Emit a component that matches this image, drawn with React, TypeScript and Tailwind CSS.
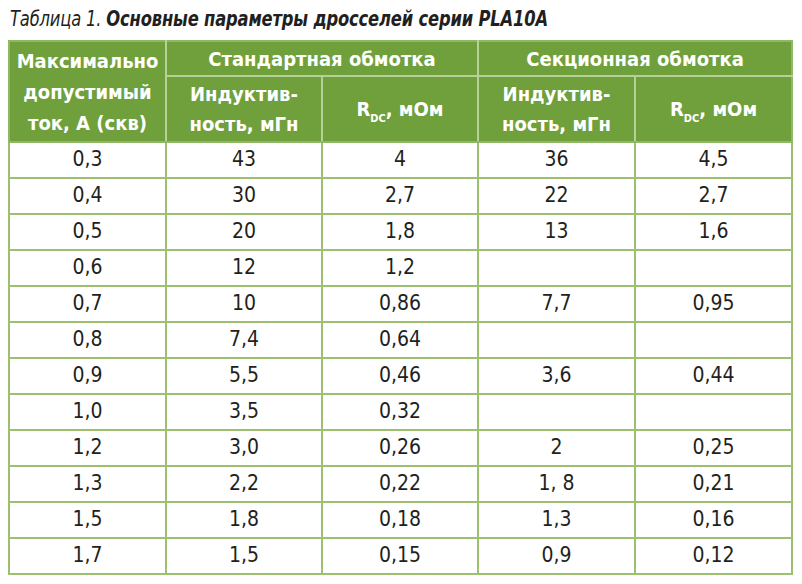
const rows: [string, string, string, string, string][] = [
  ['0,3', '43', '4', '36', '4,5'],
  ['0,4', '30', '2,7', '22', '2,7'],
  ['0,5', '20', '1,8', '13', '1,6'],
  ['0,6', '12', '1,2', '', ''],
  ['0,7', '10', '0,86', '7,7', '0,95'],
  ['0,8', '7,4', '0,64', '', ''],
  ['0,9', '5,5', '0,46', '3,6', '0,44'],
  ['1,0', '3,5', '0,32', '', ''],
  ['1,2', '3,0', '0,26', '2', '0,25'],
  ['1,3', '2,2', '0,22', '1, 8', '0,21'],
  ['1,5', '1,8', '0,18', '1,3', '0,16'],
  ['1,7', '1,5', '0,15', '0,9', '0,12'],
];

const font = "font-['Liberation_Sans_Narrow','DejaVu_Sans_Condensed','Liberation_Sans',sans-serif] [font-stretch:condensed]";

function Rdc() {
  return (
    <span>
      R<sub className="text-[11px] align-[-3px]">DC</sub>, мОм
    </span>
  );
}

export default function App() {
  return (
    <div className={`w-[802px] h-[584px] bg-white text-[#231f20] ${font}`}>
      {/* заголовок */}
      <div className="pl-[10px] pt-[5px] h-[40px] text-[22px] leading-[28px] italic whitespace-nowrap">
        <span className="inline-block origin-left scale-x-[0.825] tracking-[-0.2px]">
          <span className="font-light">Таблица 1. </span>
          <span className="font-bold">Основные параметры дросселей серии PLA10A</span>
        </span>
      </div>

      <table className="ml-[8px] w-[783px] border-collapse table-fixed text-center">
        <colgroup>
          <col className="w-[157px]" />
          <col className="w-[156px]" />
          <col className="w-[156px]" />
          <col className="w-[157px]" />
          <col className="w-[157px]" />
        </colgroup>
        <thead className="bg-[#70a03b] text-white font-bold text-[20px] leading-[24px]">
          <tr className="h-[35px]">
            <th rowSpan={2} className="border-2 border-[#8fb766] border-r-[#b5d197] font-bold leading-[31px] pt-[2px]">
              Максимально<br />допустимый<br />ток, А (скв)
            </th>
            <th colSpan={2} className="border-2 border-[#8fb766] border-x-[#b5d197] border-b-[#b5d197] font-bold">
              Стандартная обмотка
            </th>
            <th colSpan={2} className="border-2 border-[#8fb766] border-l-[#b5d197] border-b-[#b5d197] font-bold">
              Секционная обмотка
            </th>
          </tr>
          <tr className="h-[66px]">
            <th className="border-2 border-[#8fb766] border-x-[#b5d197] border-t-[#b5d197] font-bold leading-[30px]">
              Индуктив-<br />ность, мГн
            </th>
            <th className="border-2 border-[#8fb766] border-x-[#b5d197] border-t-[#b5d197] font-bold">
              <Rdc />
            </th>
            <th className="border-2 border-[#8fb766] border-x-[#b5d197] border-t-[#b5d197] font-bold leading-[30px]">
              Индуктив-<br />ность, мГн
            </th>
            <th className="border-2 border-[#8fb766] border-l-[#b5d197] border-t-[#b5d197] font-bold">
              <Rdc />
            </th>
          </tr>
        </thead>
        <tbody className="text-[21px]">
          {rows.map((r, i) => (
            <tr key={i} className="h-[36px]">
              {r.map((c, j) => (
                <td key={j} className="border-2 border-[#9cc06f] p-0">
                  {c}
                </td>
              ))}
            </tr>
          ))}
        </tbody>
      </table>
    </div>
  );
}
